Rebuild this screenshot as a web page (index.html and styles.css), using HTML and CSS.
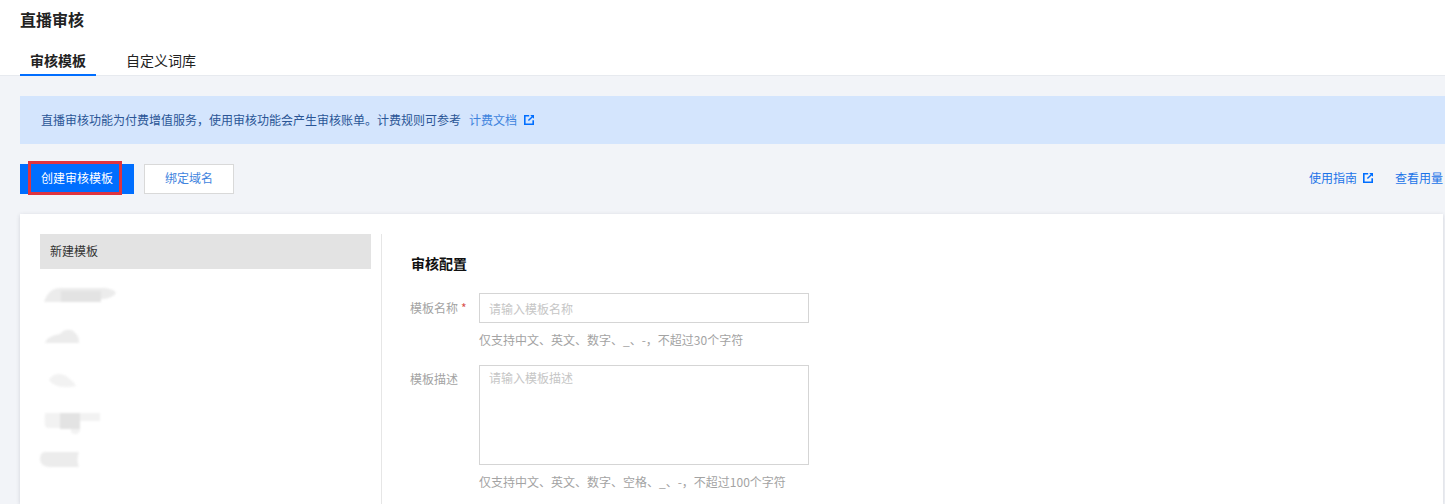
FILE: index.html
```html
<!DOCTYPE html>
<html lang="zh-CN">
<head>
<meta charset="utf-8">
<title>直播审核</title>
<link rel="stylesheet" href="styles.css">
</head>
<body>
<header class="head">
  <h1 class="title">直播审核</h1>
  <nav class="tabs">
    <a class="tab tab-on">审核模板</a>
    <a class="tab">自定义词库</a>
  </nav>
</header>
<main class="main">
  <div class="banner">
    <span>直播审核功能为付费增值服务，使用审核功能会产生审核账单。计费规则可参考</span>
    <a class="link banner-link">计费文档<svg class="ext" viewBox="0 0 10 10"><path d="M0 0H5.2V1.6H1.6V8.4H8.4V5.2H10V10H0Z"/><path d="M6.2 0H10V3.8L8.6 2.4L4.9 6.1L3.9 5.1L7.6 1.4Z"/></svg></a>
  </div>
  <div class="toolbar">
    <div class="actions">
      <div class="primary-wrap">
        <button class="btn btn-primary">创建审核模板</button>
        <span class="mark"></span>
      </div>
      <button class="btn btn-plain">绑定域名</button>
    </div>
    <div class="toplinks">
      <a class="link">使用指南<svg class="ext" viewBox="0 0 10 10"><path d="M0 0H5.2V1.6H1.6V8.4H8.4V5.2H10V10H0Z"/><path d="M6.2 0H10V3.8L8.6 2.4L4.9 6.1L3.9 5.1L7.6 1.4Z"/></svg></a>
      <a class="link">查看用量</a>
    </div>
  </div>
  <section class="card">
    <aside class="side">
      <div class="side-new">新建模板</div>
      <svg class="smudge s1" viewBox="0 0 75 20"><path class="soft" d="M3 18C6 10 10 4 20 4H60C68 4 74 6 75 9C72 13 66 15 60 15V18Z"/><rect class="hard" x="20" y="7" width="40" height="11"/></svg>
      <svg class="smudge s2" viewBox="0 0 40 20"><path class="soft" d="M3 18C5 12 12 10 18 9C22 4 30 3 33 8C36 10 37 13 37 18Z"/></svg>
      <svg class="smudge s3" viewBox="0 0 40 20"><path class="fade" d="M7 12C10 6 18 4 24 8C29 12 32 14 34 18C26 20 12 20 7 12Z"/></svg>
      <svg class="smudge s4" viewBox="0 0 60 26"><path class="fade" d="M5 4H60V12H40V22C38 26 33 26 31 23V19H8C5 19 4 16 5 4Z"/><rect class="hard" x="20" y="4" width="20" height="16"/></svg>
      <svg class="smudge s5" viewBox="0 0 40 20"><path class="soft" d="M4 3H39C37 8 37 13 39 18H10C3 18 0 14 0 10C0 7 1 4 4 3Z"/></svg>
    </aside>
    <div class="form">
      <h2 class="form-title">审核配置</h2>
      <div class="field">
        <label class="label">模板名称<i class="req">*</i></label>
        <div class="control">
          <input class="input" placeholder="请输入模板名称">
          <p class="help">仅支持中文、英文、数字、_、-，不超过30个字符</p>
        </div>
      </div>
      <div class="field field-2">
        <label class="label label-2">模板描述</label>
        <div class="control">
          <textarea class="input area" placeholder="请输入模板描述"></textarea>
          <p class="help help-2">仅支持中文、英文、数字、空格、_、-，不超过100个字符</p>
        </div>
      </div>
    </div>
  </section>
</main>
</body>
</html>
```
FILE: styles.css
```css
* { box-sizing: border-box; }
html, body { margin: 0; height: 504px; overflow: hidden; }
body {
  background: #f2f4f8;
  font: 12px/18px "Noto Sans CJK SC", "Liberation Sans", sans-serif;
  color: #444;
}
.head { height: 76px; background: #fff; border-bottom: 1px solid #e7eaef; padding: 8px 20px 0; }
.title { margin: 0; font-size: 16px; line-height: 22px; font-weight: 700; color: #222; }
.tabs { display: flex; margin-top: 19px; }
.tab { width: 76px; height: 27px; font-size: 14px; line-height: 22px; text-align: center; color: #222; white-space: nowrap; }
.tab + .tab { margin-left: 20px; width: 90px; }
.tab-on { font-weight: 700; border-bottom: 2px solid #006eff; }
.main { padding: 20px 2px 0 20px; }
.banner { height: 48px; margin-right: -2px; background: #d4e5fd; padding: 0 21px; display: flex; align-items: center; color: #2a5596; }
.link { color: #1a73e8; display: inline-flex; align-items: center; white-space: nowrap; }
.banner-link { margin-left: 8px; color: #3f84de; }
.ext { width: 10px; height: 10px; margin-left: 6px; fill: #006eff; }
.banner-link .ext { margin-left: 7px; }
.toolbar { display: flex; justify-content: space-between; align-items: center; margin-top: 20px; height: 30px; }
.actions { display: flex; gap: 10px; }
.primary-wrap { position: relative; display: flex; }
.btn { height: 30px; padding: 0 0 2px; font: inherit; cursor: pointer; }
.btn-primary { width: 114px; background: #006eff; color: #fff; border: 0; text-align: left; padding-left: 21px; }
.btn-plain { width: 90px; background: #fff; color: #3f84de; border: 1px solid #d9d9d9; }
.mark { position: absolute; left: 8px; top: -3px; width: 94px; height: 34px; border: 3px solid #e0343f; }
.toplinks { display: flex; gap: 22px; padding-bottom: 2px; }
.card { display: flex; height: 290px; margin-top: 20px; background: #fff; box-shadow: 0 1px 4px rgba(54, 58, 80, .18); padding: 20px 0 0 20px; }
.side { width: 342px; border-right: 1px solid #e6e6e6; display: flex; flex-direction: column; align-items: flex-start; }
.side-new { width: 331px; height: 35px; line-height: 33px; background: #e3e3e3; padding-left: 10px; color: #333; }
.smudge { display: block; filter: blur(.8px); }
.soft { fill: #ececec; }
.fade { fill: #f2f2f2; }
.hard { fill: #e3e3e3; }
.s1 { width: 75px; height: 20px; margin: 15px 0 0 1px; }
.s2 { width: 40px; height: 20px; margin: 21px 0 0 2px; }
.s3 { width: 40px; height: 20px; margin: 23px 0 0 2px; }
.s4 { width: 60px; height: 26px; margin: 21px 0 0 0; }
.s5 { width: 40px; height: 20px; margin: 14px 0 0 0; }
.form { padding: 0 0 0 28px; }
.form-title { margin: 0 0 0 1px; padding-top: 20px; font-size: 14px; line-height: 18px; font-weight: 700; color: #111; }
.field { display: flex; margin-top: 21px; }
.field-2 { margin-top: 16px; }
.label { width: 69px; line-height: 30px; color: #a3a3a3; }
.label-2 { line-height: 28px; }
.req { font-style: normal; color: #d9534f; margin-left: 3px; }
.control { width: 330px; }
.input { display: block; width: 330px; height: 30px; padding: 0 9px; border: 1px solid #d5d5d5; background: #fff; font: inherit; outline: 0; resize: none; }
.input::placeholder { color: #c6c6c6; opacity: 1; }
.area { height: 100px; padding-top: 3px; }
.help { margin: 8px 0 0; color: #a3a3a3; white-space: nowrap; }
```
